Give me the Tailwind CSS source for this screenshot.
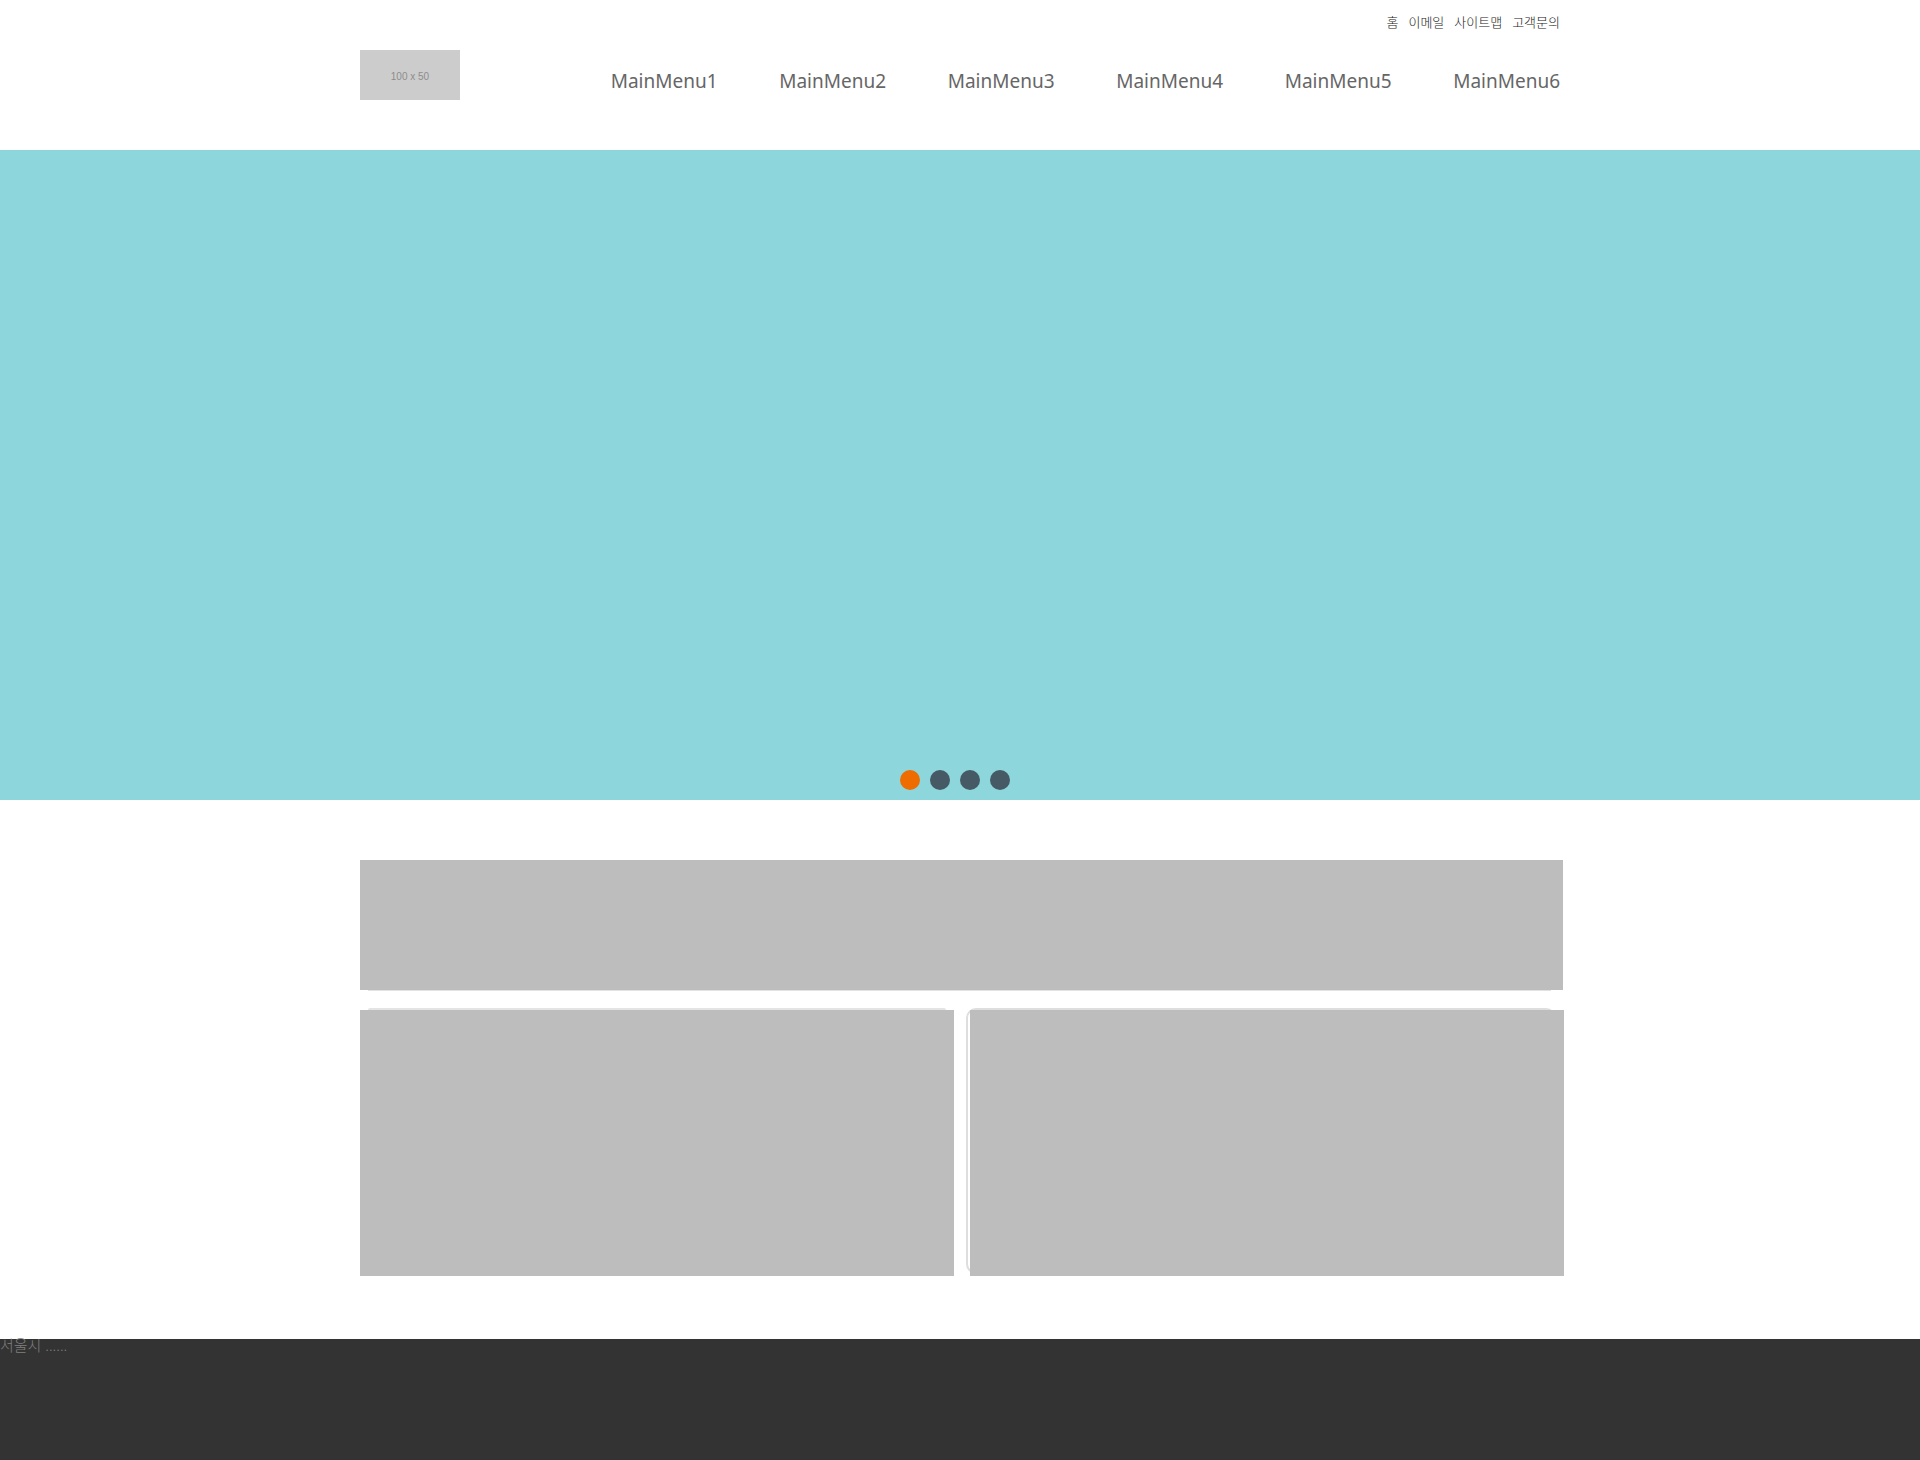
<!DOCTYPE html>
<html lang="ko">
<head>
<meta charset="utf-8">
<meta name="viewport" content="width=device-width, initial-scale=1">
<title>Main</title>
<script src="https://cdn.jsdelivr.net/npm/@tailwindcss/browser@4"></script>
</head>
<body class="flex min-h-screen flex-col bg-white font-['Noto_Sans','Noto_Sans_CJK_KR',sans-serif] text-[#666]">
  <header class="mx-auto h-[150px] w-full max-w-[1200px]">
    <nav aria-label="Utility" class="flex h-[50px] justify-end gap-[10px] pt-3 text-[13px] leading-5 font-light text-[#222]">
      <a href="#">홈</a>
      <a href="#">이메일</a>
      <a href="#">사이트맵</a>
      <a href="#">고객문의</a>
    </nav>
    <div class="flex justify-between">
      <a href="#" class="flex h-[50px] w-[100px] shrink-0 items-center justify-center bg-[#ccc] pt-[2px] font-['Liberation_Sans',sans-serif] text-[10px] text-[#8c8c8c]">100 x 50</a>
      <nav aria-label="Main" class="grid w-full max-w-[1011px] grid-cols-6 pt-[15px] text-right text-[19px] leading-8">
        <a href="#">MainMenu1</a>
        <a href="#">MainMenu2</a>
        <a href="#">MainMenu3</a>
        <a href="#">MainMenu4</a>
        <a href="#">MainMenu5</a>
        <a href="#">MainMenu6</a>
      </nav>
    </div>
  </header>

  <section aria-label="Slides" class="flex h-[650px] items-end justify-center gap-[10px] bg-[#8dd6db] pr-[10px] pb-[10px]">
    <button type="button" aria-label="Slide 1" class="size-5 rounded-full bg-[#ef6c00]"></button>
    <button type="button" aria-label="Slide 2" class="size-5 rounded-full bg-[#455a64]"></button>
    <button type="button" aria-label="Slide 3" class="size-5 rounded-full bg-[#455a64]"></button>
    <button type="button" aria-label="Slide 4" class="size-5 rounded-full bg-[#455a64]"></button>
  </section>

  <main class="mx-auto w-full max-w-[1200px] pt-[60px] pb-[63px]">
    <div class="relative h-[130px] w-[calc(100%+3px)] bg-[#bdbdbd]">
      <div class="absolute top-full right-3 left-2 h-px bg-[#e2e2e2]"></div>
    </div>
    <div class="mt-5 grid w-[calc(100%+4px)] grid-cols-2 gap-4">
      <div class="relative h-[266px] bg-[#bdbdbd]">
        <div class="absolute right-2 bottom-full left-2 h-[2px] rounded-t bg-[#e4e4e4]"></div>
      </div>
      <div class="relative h-[266px]">
        <div class="absolute -top-[2px] right-2 bottom-[2px] -left-1 rounded-[10px] border-2 border-[#dedede]"></div>
        <div class="absolute inset-0 bg-[#bdbdbd]"></div>
      </div>
    </div>
  </main>

  <footer class="grow bg-[#333] text-[15px] leading-3 font-light text-[#808080]">
    <address class="not-italic">서울시 ......</address>
  </footer>
</body>
</html>
